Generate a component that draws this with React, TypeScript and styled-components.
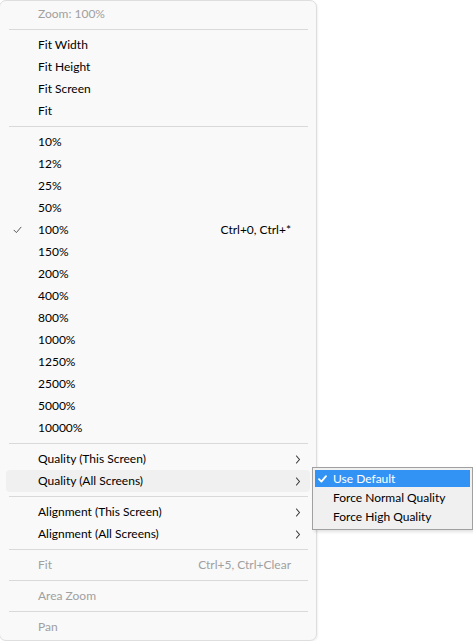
import React from 'react';
import styled, { createGlobalStyle } from 'styled-components';

const Global = createGlobalStyle`
  html, body { margin: 0; padding: 0; background: #ffffff; overflow: hidden; }
  body { font-family: "Segoe UI", Lato, "Noto Sans", sans-serif; font-size: 12px; }
`;

const Page = styled.div`
  width: 473px;
  height: 641px;
  background: #ffffff;
`;

const Menu = styled.div`
  box-sizing: border-box;
  width: 318px;
  margin-left: -1px;
  padding: 2px 6px;
  background: #f9f9f9;
  border: 1px solid #dedede;
  border-radius: 7px;
  box-shadow: 1px 1px 2px rgba(0, 0, 0, 0.06);
  display: flex;
  flex-direction: column;
`;

const Row = styled.div<{ $disabled?: boolean; $active?: boolean }>`
  position: relative;
  display: flex;
  align-items: center;
  height: 22px;
  border-radius: 4px;
  color: ${(p) => (p.$disabled ? '#a0a0a0' : '#000000')};
  background: ${(p) => (p.$active ? '#f0f0f0' : 'transparent')};
  line-height: 22px;
  white-space: nowrap;
`;

const CheckSlot = styled.span`
  box-sizing: border-box;
  width: 32px;
  padding-left: 7px;
  display: flex;
  align-items: center;
  height: 22px;
`;

const Label = styled.span`
  flex: 1;
`;

const Shortcut = styled.span``;

const ArrowSlot = styled.span`
  box-sizing: border-box;
  width: 19px;
  padding-left: 4px;
  display: flex;
  align-items: center;
  height: 22px;
`;

const Separator = styled.div`
  height: 1px;
  margin: 4px 2px 4px 3px;
  background: #d9d9d9;
`;

const SubMenu = styled.div`
  position: absolute;
  left: calc(100% + 2px);
  top: -3px;
  box-sizing: border-box;
  width: 161px;
  padding: 1px 2px 3px 2px;
  background: #f0f0f0;
  border: 1px solid #a0a0a0;
  box-shadow: 2px 2px 3px rgba(0, 0, 0, 0.12);
  display: flex;
  flex-direction: column;
  z-index: 2;
`;

const SubItem = styled.div<{ $selected?: boolean }>`
  display: flex;
  align-items: center;
  height: 17px;
  margin: 1px 0;
  color: ${(p) => (p.$selected ? '#ffffff' : '#000000')};
  background: ${(p) => (p.$selected ? '#3393f5' : 'transparent')};
  line-height: 17px;
  white-space: nowrap;
`;

const SubCheck = styled.span`
  box-sizing: border-box;
  width: 18px;
  padding-left: 3px;
  display: flex;
  align-items: center;
  height: 17px;
`;

const SubLabel = styled.span``;

const Check = ({ color, width }: { color: string; width: number }) => (
  <svg width="9" height="8" viewBox="0 0 9 8" fill="none">
    <path d="M1 4.2 L3.4 6.6 L8 1.2" stroke={color} strokeWidth={width} strokeLinecap="round" strokeLinejoin="round" />
  </svg>
);

const Chevron = () => (
  <svg width="6" height="9" viewBox="0 0 6 9" fill="none">
    <path d="M1.5 1 L4.5 4.5 L1.5 8" stroke="#333333" strokeWidth="1.1" strokeLinecap="round" strokeLinejoin="round" />
  </svg>
);

type Item =
  | { kind: 'sep' }
  | {
      kind: 'item';
      label: string;
      disabled?: boolean;
      checked?: boolean;
      shortcut?: string;
      submenu?: boolean;
      active?: boolean;
      open?: boolean;
    };

const zoomLevels = ['10%', '12%', '25%', '50%', '100%', '150%', '200%', '400%', '800%', '1000%', '1250%', '2500%', '5000%', '10000%'];

const items: Item[] = [
  { kind: 'item', label: 'Zoom: 100%', disabled: true },
  { kind: 'sep' },
  { kind: 'item', label: 'Fit Width' },
  { kind: 'item', label: 'Fit Height' },
  { kind: 'item', label: 'Fit Screen' },
  { kind: 'item', label: 'Fit' },
  { kind: 'sep' },
  ...zoomLevels.map<Item>((z) =>
    z === '100%'
      ? { kind: 'item', label: z, checked: true, shortcut: 'Ctrl+0, Ctrl+*' }
      : { kind: 'item', label: z }
  ),
  { kind: 'sep' },
  { kind: 'item', label: 'Quality (This Screen)', submenu: true },
  { kind: 'item', label: 'Quality (All Screens)', submenu: true, active: true, open: true },
  { kind: 'sep' },
  { kind: 'item', label: 'Alignment (This Screen)', submenu: true },
  { kind: 'item', label: 'Alignment (All Screens)', submenu: true },
  { kind: 'sep' },
  { kind: 'item', label: 'Fit', disabled: true, shortcut: 'Ctrl+5, Ctrl+Clear' },
  { kind: 'sep' },
  { kind: 'item', label: 'Area Zoom', disabled: true },
  { kind: 'sep' },
  { kind: 'item', label: 'Pan', disabled: true },
];

const qualityOptions = [
  { label: 'Use Default', selected: true },
  { label: 'Force Normal Quality' },
  { label: 'Force High Quality' },
];

export default function App() {
  return (
    <Page>
      <Global />
      <Menu>
        {items.map((it, i) =>
          it.kind === 'sep' ? (
            <Separator key={i} />
          ) : (
            <Row key={i} $disabled={it.disabled} $active={it.active}>
              <CheckSlot>{it.checked && <Check color="#5a5a5a" width={1} />}</CheckSlot>
              <Label>{it.label}</Label>
              {it.shortcut && <Shortcut>{it.shortcut}</Shortcut>}
              <ArrowSlot>{it.submenu && <Chevron />}</ArrowSlot>
              {it.open && (
                <SubMenu>
                  {qualityOptions.map((q) => (
                    <SubItem key={q.label} $selected={q.selected}>
                      <SubCheck>{q.selected && <Check color="#ffffff" width={1.8} />}</SubCheck>
                      <SubLabel>{q.label}</SubLabel>
                    </SubItem>
                  ))}
                </SubMenu>
              )}
            </Row>
          )
        )}
      </Menu>
    </Page>
  );
}
